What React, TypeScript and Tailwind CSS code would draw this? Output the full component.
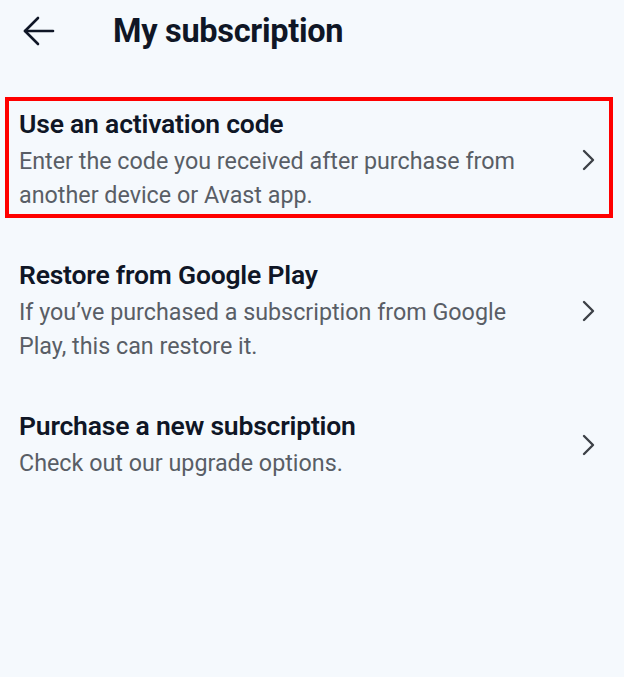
import React from "react";

const items = [
  {
    title: "Use an activation code",
    desc: ["Enter the code you received after purchase from", "another device or Avast app."],
    selected: true,
  },
  {
    title: "Restore from Google Play",
    desc: ["If you\u2019ve purchased a subscription from Google", "Play, this can restore it."],
    selected: false,
  },
  {
    title: "Purchase a new subscription",
    desc: ["Check out our upgrade options."],
    selected: false,
  },
];

function Chevron() {
  return (
    <svg width="14" height="22" viewBox="0 0 14 22" fill="none" className="shrink-0">
      <polyline points="3,2 12,11 3,20" stroke="#3d4147" strokeWidth="2.4" strokeLinecap="round" strokeLinejoin="round" />
    </svg>
  );
}

export default function App() {
  return (
    <div className="w-[624px] h-[677px] bg-[#f5f9fd] overflow-hidden" style={{ fontFamily: "Roboto, 'Noto Sans', sans-serif" }}>
      <div className="h-[62px] flex items-center">
        <div className="w-[113px] pl-[23px] flex items-center">
          <svg width="32" height="30" viewBox="0 0 32 30" fill="none">
            <path d="M2 15H30" stroke="#0f1626" strokeWidth="2.6" strokeLinecap="round" />
            <path d="M15 2L2 15L15 28" stroke="#0f1626" strokeWidth="2.6" strokeLinecap="round" strokeLinejoin="round" />
          </svg>
        </div>
        <div className="text-[32.5px] font-bold text-[#0f1626] leading-none tracking-[-0.3px]">My subscription</div>
      </div>
      <div className="mt-[35px] flex flex-col gap-[30px] pl-[5px] pr-[11px]">
        {items.map((it) => (
          <div
            key={it.title}
            className={`flex items-center border-4 pl-[10px] pr-[14px] pt-[7px] pb-[2px] ${it.selected ? "border-[#ff0000]" : "border-transparent"}`}
          >
            <div className="flex-1">
              <div className="text-[26.5px] font-semibold text-[#0f1626] leading-[32px] tracking-[-0.2px]">{it.title}</div>
              <div className="mt-[4px] text-[23.3px] text-[#595e66] leading-[34px]">
                {it.desc.map((d) => (
                  <div key={d}>{d}</div>
                ))}
              </div>
            </div>
            <Chevron />
          </div>
        ))}
      </div>
    </div>
  );
}
